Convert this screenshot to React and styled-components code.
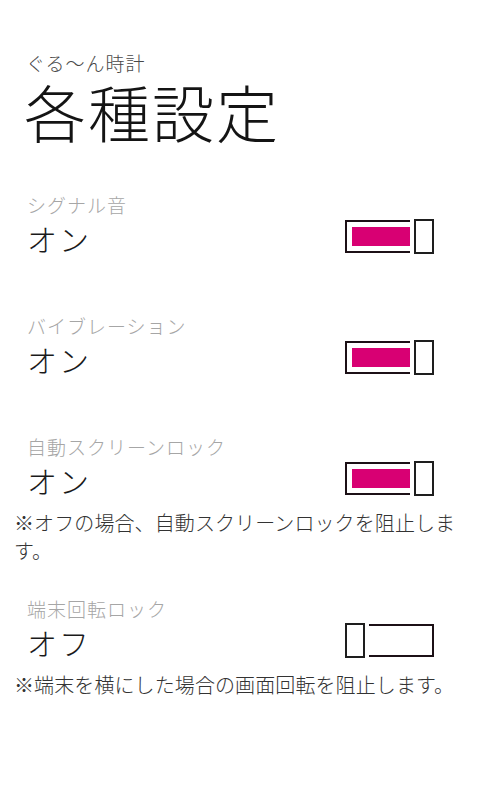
import React from 'react';
import styled, { createGlobalStyle } from 'styled-components';

const GlobalStyle = createGlobalStyle`
  html, body {
    margin: 0;
    padding: 0;
    background: #ffffff;
  }
  body {
    font-family: "Noto Sans CJK JP", "Noto Sans", sans-serif;
    font-weight: 300;
    color: #1a1a1a;
  }
`;

const Page = styled.div`
  width: 486px;
  min-height: 810px;
  box-sizing: border-box;
  padding: 50px 20px 0 14px;
`;

const Header = styled.header`
  margin-left: 12px;
  margin-bottom: 46px;
`;

const AppTitle = styled.div`
  font-size: 19px;
  line-height: 26px;
  letter-spacing: 1px;
  color: #484848;
`;

const PageTitle = styled.h1`
  margin: 0 0 0 -2px;
  font-size: 62px;
  line-height: 70px;
  font-weight: 300;
  letter-spacing: 2px;
  color: #141414;
`;

const Section = styled.section`
  margin-bottom: ${(p) => (p.$note ? '31px' : '59px')};
`;

const Label = styled.div`
  margin-left: 13px;
  font-size: 19px;
  line-height: 26px;
  letter-spacing: 1px;
  color: #a6a6a6;
`;

const Row = styled.div`
  display: flex;
  align-items: center;
  justify-content: space-between;
  height: 36px;
  margin-left: 13px;
  padding-right: 32px;
`;

const Value = styled.div`
  font-size: 30px;
  line-height: 36px;
  padding-top: 4px;
  letter-spacing: 2px;
  color: #1a1a1a;
`;

const Note = styled.p`
  margin: 13px 0 0;
  font-size: 20px;
  line-height: 28px;
  letter-spacing: 0.1px;
  color: #333333;
`;

const Toggle = styled.div`
  display: flex;
  flex-direction: ${(p) => (p.$on ? 'row' : 'row-reverse')};
  align-items: center;
  gap: 4px;
  width: 89px;
  height: 36px;
`;

const Track = styled.div`
  box-sizing: border-box;
  width: 65px;
  height: 33px;
  border: 2px solid #1c1016;
  ${(p) => (p.$on ? 'border-right: none;' : 'border-left: none;')}
  padding: 5px 0 5px 5px;
`;

const Fill = styled.div`
  height: 100%;
  background: #d80073;
`;

const Thumb = styled.div`
  box-sizing: border-box;
  width: 20px;
  height: 35px;
  border: 2px solid #1e1e1e;
  background: #ffffff;
`;

function Switch({ on }) {
  return (
    <Toggle $on={on}>
      <Track $on={on}>{on && <Fill />}</Track>
      <Thumb />
    </Toggle>
  );
}

const settings = [
  { label: 'シグナル音', on: true },
  { label: 'バイブレーション', on: true },
  { label: '自動スクリーンロック', on: true, note: '※オフの場合、自動スクリーンロックを阻止します。' },
  { label: '端末回転ロック', on: false, note: '※端末を横にした場合の画面回転を阻止します。' },
];

export default function App() {
  return (
    <>
      <GlobalStyle />
      <Page>
        <Header>
          <AppTitle>ぐる～ん時計</AppTitle>
          <PageTitle>各種設定</PageTitle>
        </Header>
        {settings.map((s) => (
          <Section key={s.label} $note={!!s.note}>
            <Label>{s.label}</Label>
            <Row>
              <Value>{s.on ? 'オン' : 'オフ'}</Value>
              <Switch on={s.on} />
            </Row>
            {s.note && <Note>{s.note}</Note>}
          </Section>
        ))}
      </Page>
    </>
  );
}
